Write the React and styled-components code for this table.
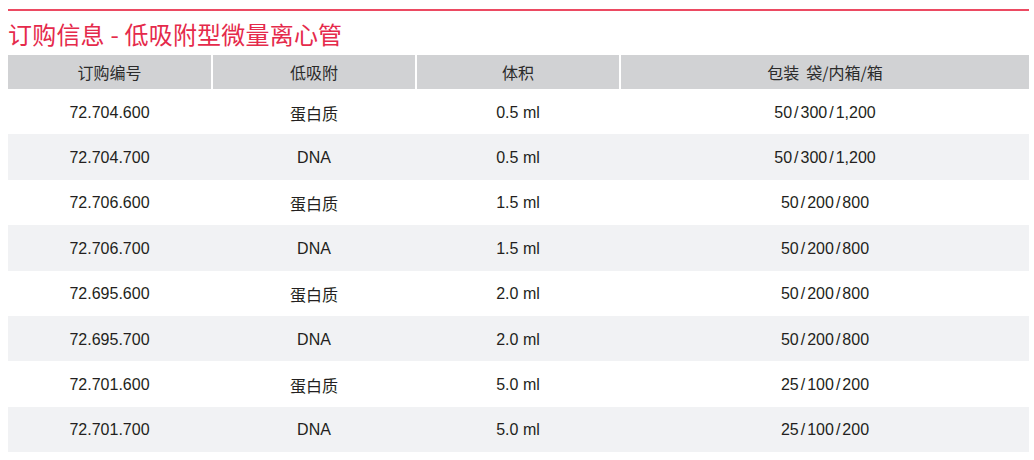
import React from 'react';
import styled, { createGlobalStyle } from 'styled-components';

const GlobalStyle = createGlobalStyle`
  html, body {
    margin: 0;
    padding: 0;
    background: #ffffff;
  }
  body {
    font-family: "Liberation Sans", "Noto Sans CJK SC", sans-serif;
    color: #231f20;
  }
`;

// Page wrapper: red rule on top, title, then the table
const Page = styled.div`
  width: 1021px;
  padding: 9px 0 0 8px;
`;

const TopRule = styled.div`
  height: 2px;
  background: #ec4a62;
`;

const Title = styled.h1`
  margin: 0;
  height: 44px;
  display: flex;
  align-items: center;
  font-family: "Noto Sans CJK SC", sans-serif;
  font-weight: 400;
  font-size: 24px;
  letter-spacing: 0.2px;
  color: #e52a4b;
  white-space: pre;
`;

// Shared column layout, white gaps act as header dividers
const Row = styled.div`
  display: grid;
  grid-template-columns: 203px 202px 202px 408px;
  column-gap: 2px;
  height: ${({ $height }) => $height};
  background: ${({ $bg }) => $bg};
`;

const HeadCell = styled.div`
  display: flex;
  align-items: center;
  justify-content: center;
  background: #d1d2d4;
  font-family: "Noto Sans CJK SC", sans-serif;
  font-size: 16px;
  color: #2b2b2b;
  white-space: pre;
`;

const Cell = styled.div`
  display: flex;
  align-items: center;
  justify-content: center;
  padding-top: 2px;
  font-size: 16px;
  color: #231f20;
`;

const Slash = styled.span`
  margin: 0 2px;
`;

const rows = [
  ['72.704.600', '蛋白质', '0.5 ml', '50/300/1,200'],
  ['72.704.700', 'DNA', '0.5 ml', '50/300/1,200'],
  ['72.706.600', '蛋白质', '1.5 ml', '50/200/800'],
  ['72.706.700', 'DNA', '1.5 ml', '50/200/800'],
  ['72.695.600', '蛋白质', '2.0 ml', '50/200/800'],
  ['72.695.700', 'DNA', '2.0 ml', '50/200/800'],
  ['72.701.600', '蛋白质', '5.0 ml', '25/100/200'],
  ['72.701.700', 'DNA', '5.0 ml', '25/100/200'],
];

const Packing = ({ value }) => {
  const parts = value.split('/');
  return (
    <>
      {parts.map((p, i) => (
        <React.Fragment key={i}>
          {i > 0 && <Slash>/</Slash>}
          {p}
        </React.Fragment>
      ))}
    </>
  );
};

const App = () => {
  return (
    <Page>
      <GlobalStyle />
      <TopRule />
      <Title>订购信息 - 低吸附型微量离心管</Title>
      <Row $height="34px" $bg="#ffffff">
        <HeadCell>订购编号</HeadCell>
        <HeadCell>低吸附</HeadCell>
        <HeadCell>体积</HeadCell>
        <HeadCell>包装  袋/内箱/箱</HeadCell>
      </Row>
      {rows.map((r, i) => (
        <Row key={r[0]} $height="45.375px" $bg={i % 2 ? '#f1f2f4' : '#ffffff'}>
          <Cell>{r[0]}</Cell>
          <Cell>{r[1]}</Cell>
          <Cell>{r[2]}</Cell>
          <Cell><Packing value={r[3]} /></Cell>
        </Row>
      ))}
    </Page>
  );
};

export default App;
